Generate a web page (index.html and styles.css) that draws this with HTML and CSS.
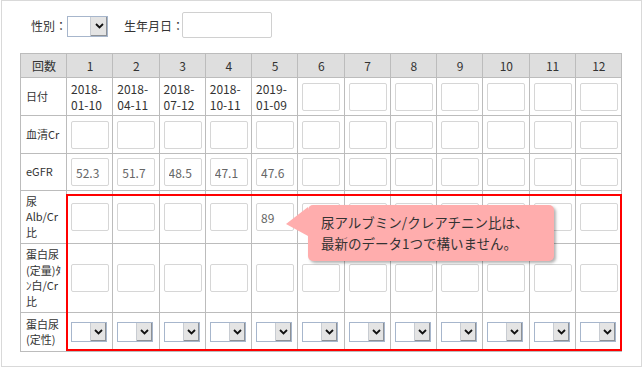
FILE: index.html
```html
<!DOCTYPE html>
<html lang="ja">
<head>
    <meta charset="UTF-8">
    <title>検査値入力</title>
    <link rel="stylesheet" href="styles.css">
</head>
<body>

<div class="frame">

    <div class="profile">
        <label class="profile-label">性別：</label>
        <span class="pick pick-wide">
            <select></select>
            <span class="pick-btn"><svg width="9" height="6" viewBox="0 0 9 6"><path d="M1 1 L4.5 4.5 L8 1" fill="none" stroke="#111" stroke-width="1.8"/></svg></span>
        </span>
        <label class="profile-label birth">生年月日：</label>
        <input class="birth-input" type="text">
    </div>

    <table class="lab">
        <colgroup>
            <col class="col-head">
            <col span="12">
        </colgroup>
        <tr class="row-num">
            <th>回数</th>
            <th>1</th><th>2</th><th>3</th><th>4</th><th>5</th><th>6</th>
            <th>7</th><th>8</th><th>9</th><th>10</th><th>11</th><th>12</th>
        </tr>
        <tr class="row-date">
            <td class="name">日付</td>
            <td class="date">2018-<br>01-10</td>
            <td class="date">2018-<br>04-11</td>
            <td class="date">2018-<br>07-12</td>
            <td class="date">2018-<br>10-11</td>
            <td class="date">2019-<br>01-09</td>
            <td><input class="box"></td><td><input class="box"></td><td><input class="box"></td>
            <td><input class="box"></td><td><input class="box"></td><td><input class="box"></td>
            <td><input class="box"></td>
        </tr>
        <tr class="row-cr">
            <td class="name">血清Cr</td>
            <td><input class="box"></td><td><input class="box"></td><td><input class="box"></td>
            <td><input class="box"></td><td><input class="box"></td><td><input class="box"></td>
            <td><input class="box"></td><td><input class="box"></td><td><input class="box"></td>
            <td><input class="box"></td><td><input class="box"></td><td><input class="box"></td>
        </tr>
        <tr class="row-egfr">
            <td class="name">eGFR</td>
            <td><input class="box" value="52.3"></td>
            <td><input class="box" value="51.7"></td>
            <td><input class="box" value="48.5"></td>
            <td><input class="box" value="47.1"></td>
            <td><input class="box" value="47.6"></td>
            <td><input class="box"></td><td><input class="box"></td><td><input class="box"></td>
            <td><input class="box"></td><td><input class="box"></td><td><input class="box"></td>
            <td><input class="box"></td>
        </tr>
        <tr class="row-alb">
            <td class="name">尿<br>Alb/Cr<br>比</td>
            <td><input class="box"></td><td><input class="box"></td><td><input class="box"></td>
            <td><input class="box"></td>
            <td><input class="box" value="89"></td>
            <td><input class="box"></td><td><input class="box"></td><td><input class="box"></td>
            <td><input class="box"></td><td><input class="box"></td><td><input class="box"></td>
            <td><input class="box"></td>
        </tr>
        <tr class="row-qty">
            <td class="name">蛋白尿<br>(定量)ﾀ<br>ﾝ白/Cr<br>比</td>
            <td><input class="box"></td><td><input class="box"></td><td><input class="box"></td>
            <td><input class="box"></td><td><input class="box"></td><td><input class="box"></td>
            <td><input class="box"></td><td><input class="box"></td><td><input class="box"></td>
            <td><input class="box"></td><td><input class="box"></td><td><input class="box"></td>
        </tr>
        <tr class="row-qual" id="qualRow">
            <td class="name">蛋白尿<br>(定性)</td>
        </tr>
    </table>

    <div class="highlight"></div>

    <div class="callout">
        尿アルブミン/クレアチニン比は、<br>最新のデータ1つで構いません。
    </div>

</div>

<script>
    // 定性の行はセレクトを12個並べる
    let qualRow = document.getElementById("qualRow");
    for (let i = 1; i <= 12; i++) {
        let cell = document.createElement("td");
        cell.innerHTML = `
            <span class="pick">
                <select></select>
                <span class="pick-btn"><svg width="9" height="6" viewBox="0 0 9 6"><path d="M1 1 L4.5 4.5 L8 1" fill="none" stroke="#111" stroke-width="1.8"/></svg></span>
            </span>
        `;
        qualRow.appendChild(cell);
    }
</script>

</body>
</html>
```

FILE: styles.css
```css
body {
    margin: 0;
    font-family: "Noto Sans CJK JP", "Noto Sans", sans-serif;
    color: #333;
    background-color: #fff;
}

.frame {
    position: relative;
    width: 641px;
    height: 367px;
    margin-left: 1px;
    border: 1px solid #d9d9d9;
    box-sizing: border-box;
}

/* 上部の基本情報 */
.profile {
    display: flex;
    align-items: center;
    padding: 11px 0 0 29px;
    height: 26px;
    font-size: 12px;
}

.profile-label {
    color: #333;
}

.birth {
    margin-left: 16px;
    margin-right: -2px;
}

.birth-input {
    width: 90px;
    height: 26px;
    box-sizing: border-box;
    border: 1px solid #d0d0d0;
    border-radius: 2px;
}

/* セレクト */
.pick {
    display: inline-flex;
    width: 36px;
    height: 20px;
    box-sizing: border-box;
    border: 1px solid #a7b6cc;
    background-color: #fff;
    vertical-align: middle;
}

.pick select {
    appearance: none;
    flex: 1;
    min-width: 0;
    border: none;
    background: transparent;
    padding: 0;
    margin: 0;
}

.pick-btn {
    display: flex;
    align-items: center;
    justify-content: center;
    width: 15px;
    background-color: #e4e4e4;
    border-left: 1px solid #c8ccd2;
    box-shadow: inset -1px -1px 0 #8d9196;
}

.pick-wide {
    width: 41px;
    height: 21px;
    margin-top: 2px;
}

.pick-wide .pick-btn {
    width: 16px;
}

/* 検査値テーブル */
.lab {
    margin: 15px 0 0 18px;
    width: 602px;
    table-layout: fixed;
    border-collapse: collapse;
    font-size: 12px;
}

.col-head {
    width: 46px;
}

.lab th,
.lab td {
    border: 1px solid #bcbcbc;
    padding: 0 3px 0 4px;
    text-align: left;
    vertical-align: middle;
    line-height: 15px;
}

.lab th {
    background-color: #dedede;
    font-weight: normal;
    text-align: center;
    color: #333;
}

.lab td.date {
    line-height: 16px;
    padding-top: 1px;
}

.lab td.name {
    font-size: 11px;
    padding-left: 5px;
    line-height: 15.5px;
    color: #333;
}

.row-num { height: 24px; }
.row-date { height: 38px; }
.row-cr { height: 38px; }
.row-egfr { height: 37px; }
.row-alb { height: 53px; }
.row-qty { height: 69px; }
.row-qual { height: 39px; }

.box {
    display: block;
    width: 38px;
    height: 28px;
    box-sizing: border-box;
    border: 1px solid #d6d6d6;
    border-radius: 2px;
    padding: 0 4px;
    font-family: inherit;
    font-size: 12px;
    color: #666;
}

/* 赤枠と吹き出し */
.highlight {
    position: absolute;
    left: 64px;
    top: 193px;
    width: 556px;
    height: 157px;
    box-sizing: border-box;
    border: 2px solid #f00;
}

.callout {
    position: absolute;
    left: 306px;
    top: 204px;
    width: 246px;
    height: 56px;
    box-sizing: border-box;
    padding: 7px 0 0 13px;
    background-color: #ffadad;
    border-radius: 5px;
    box-shadow: 2px 2px 3px rgba(0, 0, 0, 0.3);
    font-size: 13.5px;
    line-height: 21px;
    color: #333;
}

.callout::before {
    content: "";
    position: absolute;
    left: -22px;
    top: 2px;
    border-right: 22px solid #ffadad;
    border-top: 17px solid transparent;
    border-bottom: 12px solid transparent;
}
```
